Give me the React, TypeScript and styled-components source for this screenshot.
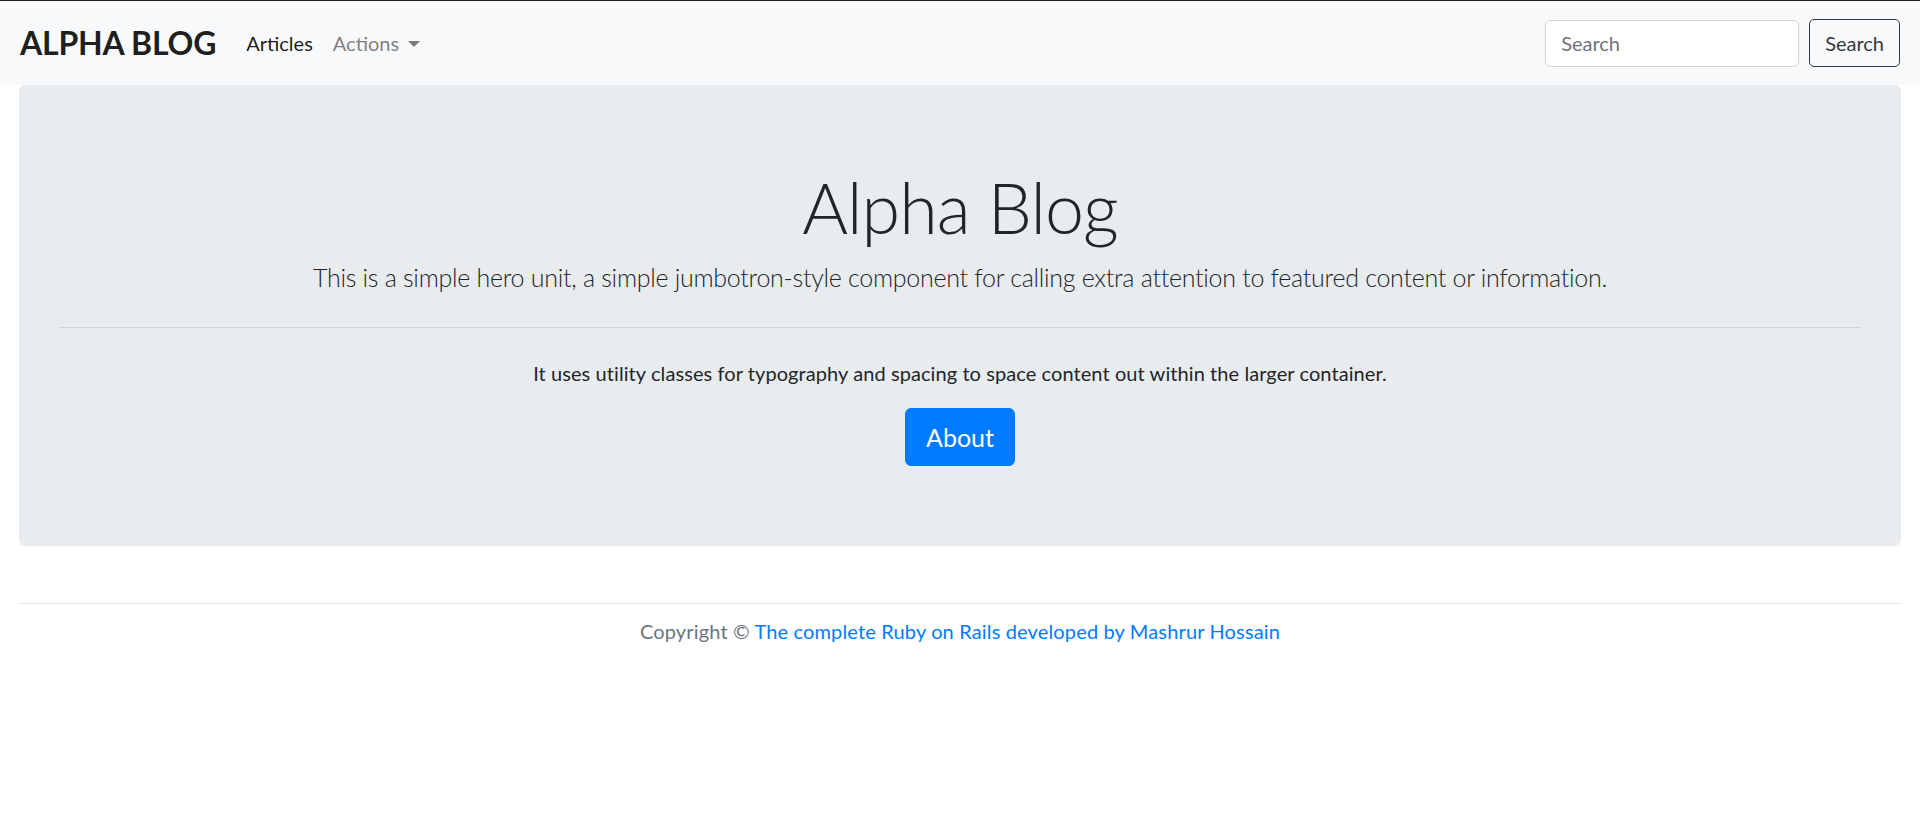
import React from "react";
import styled, { createGlobalStyle } from "styled-components";

const GlobalStyle = createGlobalStyle`
  *, *::before, *::after { box-sizing: border-box; }
  html, body { margin: 0; padding: 0; }
  body {
    font-family: "Lato", "Open Sans", sans-serif;
    font-size: 20px;
    line-height: 1.5;
    color: #212529;
    background: #ffffff;
    border-top: 1px solid #1f1f1f;
  }
`;

const Navbar = styled.nav`
  display: flex;
  align-items: center;
  justify-content: space-between;
  padding: 10px 20px;
  height: 84px;
  background: #f8f9fa;
`;

const NavLeft = styled.div`
  display: flex;
  align-items: center;
`;

const Brand = styled.a`
  font-family: "Lato", sans-serif;
  font-weight: 700;
  font-size: 32px;
  line-height: 52px;
  color: rgba(0, 0, 0, 0.9);
  text-decoration: none;
  margin-right: 20px;
  letter-spacing: -0.2px;
`;

const NavLink = styled.a<{ $active?: boolean }>`
  display: inline-flex;
  align-items: center;
  padding: 10px;
  font-size: 20px;
  line-height: 30px;
  text-decoration: none;
  color: ${(p) => (p.$active ? "rgba(0,0,0,0.9)" : "rgba(0,0,0,0.5)")};
`;

const Caret = styled.span`
  display: inline-block;
  margin-left: 9px;
  margin-top: 2px;
  width: 0;
  height: 0;
  border-top: 6px solid rgba(0, 0, 0, 0.5);
  border-left: 6px solid transparent;
  border-right: 6px solid transparent;
`;

const SearchForm = styled.form`
  display: flex;
  align-items: center;
`;

const SearchInput = styled.input`
  width: 254px;
  height: 47px;
  padding: 7px 15px;
  margin-right: 10px;
  font-family: "Lato", sans-serif;
  font-size: 20px;
  color: #495057;
  background: #ffffff;
  border: 1px solid #ced4da;
  border-radius: 5px;
  outline: none;
  &::placeholder {
    color: #6c757d;
  }
`;

const OutlineButton = styled.button`
  height: 48px;
  padding: 0 15px;
  font-family: "Lato", sans-serif;
  font-size: 20px;
  color: #343a40;
  background: transparent;
  border: 1px solid #343a40;
  border-radius: 5px;
`;

const Container = styled.main`
  padding: 0 19px;
`;

const Jumbotron = styled.section`
  background: #e9ecef;
  border-radius: 6px;
  padding: 80px 40px;
  text-align: center;
`;

const Display = styled.h1`
  margin: 0 0 10px;
  font-size: 70px;
  font-weight: 300;
  line-height: 84px;
  letter-spacing: -0.9px;
  color: #212529;
`;

const Lead = styled.p`
  margin: 0;
  font-size: 25px;
  font-weight: 300;
  line-height: 37.5px;
  letter-spacing: -0.28px;
`;

const Divider = styled.hr`
  height: 0;
  margin: 30px 0;
  border: 0;
  border-top: 1px solid rgba(0, 0, 0, 0.1);
`;

const Text = styled.p`
  margin: 0 0 20px;
  font-size: 20px;
  line-height: 30px;
  letter-spacing: 0.08px;
`;

const ButtonRow = styled.div`
  display: flex;
  justify-content: center;
`;

const PrimaryButton = styled.a`
  display: inline-block;
  padding: 10px 20px;
  font-size: 25px;
  line-height: 36.5px;
  color: #ffffff;
  background: #007bff;
  border: 1px solid #007bff;
  border-radius: 6px;
  text-decoration: none;
`;

const Footer = styled.footer`
  margin-top: 57px;
  text-align: center;
`;

const FooterRule = styled.hr`
  height: 0;
  margin: 0 0 12px;
  border: 0;
  border-top: 1px solid rgba(0, 0, 0, 0.1);
`;

const FooterText = styled.p`
  margin: 0;
  font-size: 20px;
  line-height: 30px;
  color: #6c757d;
  letter-spacing: 0.15px;
`;

const FooterLink = styled.a`
  color: #007bff;
  text-decoration: none;
`;

export default function App() {
  return (
    <>
      <GlobalStyle />
      <Navbar>
        <NavLeft>
          <Brand href="#">ALPHA BLOG</Brand>
          <NavLink href="#" $active>
            Articles
          </NavLink>
          <NavLink href="#">
            Actions
            <Caret />
          </NavLink>
        </NavLeft>
        <SearchForm onSubmit={(e) => e.preventDefault()}>
          <SearchInput type="search" placeholder="Search" aria-label="Search" />
          <OutlineButton type="submit">Search</OutlineButton>
        </SearchForm>
      </Navbar>
      <Container>
        <Jumbotron>
          <Display>Alpha Blog</Display>
          <Lead>
            This is a simple hero unit, a simple jumbotron-style component for calling extra attention to featured
            content or information.
          </Lead>
          <Divider />
          <Text>It uses utility classes for typography and spacing to space content out within the larger container.</Text>
          <ButtonRow>
            <PrimaryButton href="#" role="button">
              About
            </PrimaryButton>
          </ButtonRow>
        </Jumbotron>
        <Footer>
          <FooterRule />
          <FooterText>
            Copyright © <FooterLink href="#">The complete Ruby on Rails developed by Mashrur Hossain</FooterLink>
          </FooterText>
        </Footer>
      </Container>
    </>
  );
}
